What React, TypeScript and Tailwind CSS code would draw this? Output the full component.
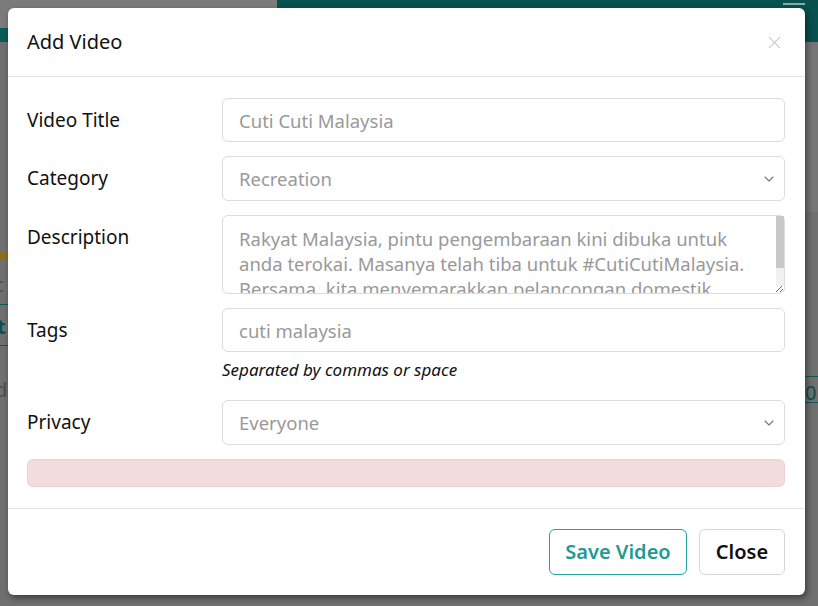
import { ChevronDown, X } from "lucide-react";

const description =
  "Rakyat Malaysia, pintu pengembaraan kini dibuka untuk anda terokai. Masanya telah tiba untuk #CutiCutiMalaysia. Bersama, kita menyemarakkan pelancongan domestik dengan mematuhi SOP yang ditetapkan. Jom cuti-cuti Malaysia!";

function Row({ label, children }: { label: string; children: React.ReactNode }) {
  return (
    <div className="flex">
      <label className="w-[195px] shrink-0 pt-[9px] text-[19px] leading-[27px] text-[#111]">{label}</label>
      <div className="flex-1">{children}</div>
    </div>
  );
}

function Select({ value }: { value: string }) {
  return (
    <div className="relative">
      <select
        defaultValue={value}
        className="h-[45px] w-full appearance-none rounded-[6px] border border-[#dcdcdc] bg-white px-4 text-[18.5px] text-[#999] outline-none"
      >
        <option>{value}</option>
      </select>
      <ChevronDown
        size={16}
        strokeWidth={1.6}
        className="pointer-events-none absolute right-[8px] top-1/2 -translate-y-1/2 text-[#777]"
      />
    </div>
  );
}

export default function App() {
  return (
    <div
      className="relative h-[606px] w-[818px] overflow-hidden bg-[#6f6f6f]"
      style={{ fontFamily: '"Noto Sans", "Open Sans", sans-serif' }}
    >
      {/* page behind the dialog, dimmed */}
      <div className="flex h-[42px]">
        <div className="flex w-[277px] flex-col">
          <div className="h-[28px] bg-[#7b7b7b]" />
          <div className="flex-1 bg-[#0b5a57]" />
        </div>
        <div className="relative flex-1 bg-[#07514f]">
          <div className="absolute right-[13px] top-[3px] h-[2px] w-[22px] bg-[#8aa9a8]" />
        </div>
      </div>
      <div className="absolute left-0 top-[252px] h-[8px] w-[8px] bg-[#8a6f1a]" />
      <div className="absolute left-[-6px] top-[270px] text-[20px] text-[#4e4e4e]">c</div>
      <div className="absolute left-0 top-[304px] h-[1px] w-[8px] bg-[#0b5a57]" />
      <div className="absolute left-[-3px] top-[312px] text-[20px] font-bold text-[#0b4f4d]">t</div>
      <div className="absolute left-0 top-[345px] h-[1px] w-[8px] bg-[#0b5a57]" />
      <div className="absolute left-[-5px] top-[375px] text-[20px] text-[#4e4e4e]">d</div>
      <div className="absolute left-[805px] top-[376px] h-[1px] w-[13px] bg-[#0b5a57]" />
      <div className="absolute left-[805px] top-[378px] text-[20px] text-[#0b4f4d]">0</div>
      <div className="absolute left-[805px] top-[402px] h-[1px] w-[13px] bg-[#0b5a57]" />
      <div className="absolute left-[805px] top-[42px] h-[170px] w-[13px] bg-[#767676]" />

      {/* dialog */}
      <div className="absolute left-[8px] top-[8px] flex w-[797px] flex-col rounded-[6px] bg-white shadow-[2px_3px_6px_rgba(0,0,0,0.45)]">
        <div className="flex h-[69px] items-center justify-between border-b border-[#e5e5e5] pl-[19px] pr-[20px]">
          <h2 className="text-[20px] font-normal text-[#111]">Add Video</h2>
          <X size={21} strokeWidth={1.2} className="text-[#bdbdbd]" />
        </div>

        <div className="flex flex-col gap-[14px] pb-[21px] pl-[19px] pr-[20px] pt-[21px]">
          <Row label="Video Title">
            <input
              defaultValue="Cuti Cuti Malaysia"
              className="h-[44px] w-full rounded-[6px] border border-[#dcdcdc] px-4 text-[18.5px] text-[#999] outline-none"
            />
          </Row>
          <Row label="Category">
            <Select value="Recreation" />
          </Row>
          <Row label="Description">
            <div className="relative">
              <textarea
                defaultValue={description}
                className="block h-[79px] w-full resize-y overflow-hidden rounded-[6px] border border-[#dcdcdc] pl-4 pr-[26px] pt-[10px] text-[18.5px] leading-[25px] text-[#999] outline-none"
              />
              {/* scrollbar */}
              <div className="pointer-events-none absolute right-[1px] top-[1px] flex h-[70px] w-[8px] flex-col bg-[#f1f1f1]">
                <div className="h-[52px] bg-[#c8c8c8]" />
              </div>
            </div>
          </Row>
          <Row label="Tags">
            <input
              defaultValue="cuti malaysia"
              className="h-[44px] w-full rounded-[6px] border border-[#dcdcdc] px-4 text-[18.5px] text-[#999] outline-none"
            />
            <p className="mt-[6px] text-[17px] italic leading-[24px] text-[#111]">Separated by commas or space</p>
          </Row>
          <div className="mt-[4px]">
            <Row label="Privacy">
              <Select value="Everyone" />
            </Row>
          </div>
          <div className="h-[28px] rounded-[6px] border border-[#f0d0d3] bg-[#f2dcde]" />
        </div>

        <div className="flex justify-end gap-[12px] border-t border-[#e5e5e5] pb-[20px] pr-[20px] pt-[20px]">
          <button className="h-[46px] w-[138px] rounded-[6px] border border-[#25a39d] text-[20px] font-semibold text-[#1f9a94]">
            Save Video
          </button>
          <button className="h-[46px] w-[86px] rounded-[6px] border border-[#d6d6d6] text-[20px] font-semibold text-[#111]">
            Close
          </button>
        </div>
      </div>
    </div>
  );
}
